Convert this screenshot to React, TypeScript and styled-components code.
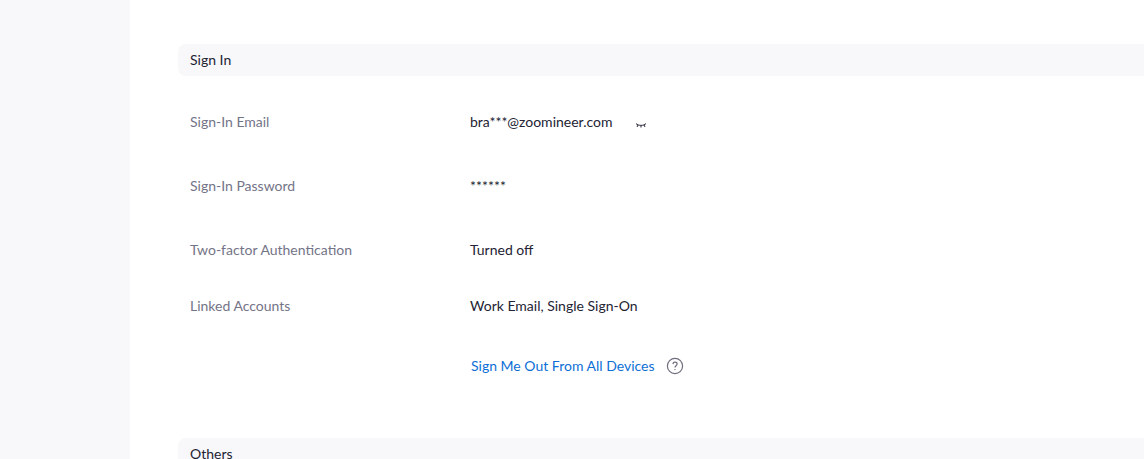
import styled, { createGlobalStyle } from "styled-components";

const GlobalStyle = createGlobalStyle`
  html, body {
    margin: 0;
    height: 100%;
    overflow: hidden;
    background-color: #ffffff;
    font-family: Lato, "Open Sans", sans-serif;
  }
`;

const Page = styled.div`
  display: flex;
  width: 1144px;
  height: 459px;
  overflow: hidden;
`;

const Sidebar = styled.aside`
  flex: 0 0 130px;
  background-color: #f8f8fb;
`;

const Main = styled.main`
  flex: 1;
  padding: 44px 0 0 48px;
`;

const SectionHeader = styled.h2`
  display: flex;
  align-items: center;
  box-sizing: border-box;
  height: 32px;
  margin: 0;
  padding: 0 0 2px 12px;
  border-radius: 8px 0 0 8px;
  background-color: #f8f8fb;
  font-size: 14px;
  font-weight: 400;
  color: #232333;
`;

const Rows = styled.div`
  display: flex;
  flex-direction: column;
  padding: 14px 0 36px;
`;

const Row = styled.div<{ $height: number }>`
  display: grid;
  grid-template-columns: 280px 1fr;
  align-items: center;
  box-sizing: border-box;
  height: ${(props) => props.$height}px;
  padding: 0 0 2px 12px;
`;

const Label = styled.div`
  font-size: 14px;
  color: #747487;
`;

const Value = styled.div`
  display: flex;
  align-items: center;
  font-size: 14px;
  color: #232333;
`;

const Stars = styled.span`
  font-size: 14px;
  letter-spacing: 0.05px;
`;

const EyeButton = styled.button`
  display: flex;
  margin: 7px 0 0 23px;
  padding: 0;
  border: 0;
  background: none;
  cursor: pointer;
`;

const SignOutLink = styled.a`
  margin-left: 1px;
  font-size: 14px;
  color: #0d6fd6;
  text-decoration: none;
`;

const HelpIcon = styled.span`
  display: flex;
  margin: 2px 0 0 11px;
  color: #6e6e7e;
`;

function ClosedEye() {
  return (
    <svg width="12" height="8" viewBox="0 0 12 8" fill="none" stroke="#232333" strokeWidth="1">
      <path d="M1 2.5C3 5 9 5 11 2.5" />
      <path d="M3 4L2 6M6 5v1.5M9 4l1 2" />
    </svg>
  );
}

function Help() {
  return (
    <svg width="18" height="18" viewBox="0 0 18 18" fill="none" stroke="currentColor">
      <circle cx="9" cy="9" r="7.6" strokeWidth="1.2" />
      <path d="M6.9 7.1C7 5.8 7.9 5.2 9 5.2c1.2 0 2.1.7 2.1 1.8 0 1.7-2.1 1.7-2.1 3.5" strokeWidth="1.2" />
      <circle cx="9" cy="12.6" r="0.7" fill="currentColor" stroke="none" />
    </svg>
  );
}

export default function App() {
  return (
    <Page>
      <GlobalStyle />
      <Sidebar />
      <Main>
        <SectionHeader>Sign In</SectionHeader>
        <Rows>
          <Row $height={64}>
            <Label>Sign-In Email</Label>
            <Value>
              bra***@zoomineer.com
              <EyeButton aria-label="Show email">
                <ClosedEye />
              </EyeButton>
            </Value>
          </Row>
          <Row $height={64}>
            <Label>Sign-In Password</Label>
            <Value>
              <Stars>******</Stars>
            </Value>
          </Row>
          <Row $height={64}>
            <Label>Two-factor Authentication</Label>
            <Value>Turned off</Value>
          </Row>
          <Row $height={48}>
            <Label>Linked Accounts</Label>
            <Value>Work Email, Single Sign-On</Value>
          </Row>
          <Row $height={72}>
            <div />
            <Value>
              <SignOutLink href="#">Sign Me Out From All Devices</SignOutLink>
              <HelpIcon>
                <Help />
              </HelpIcon>
            </Value>
          </Row>
        </Rows>
        <SectionHeader>Others</SectionHeader>
      </Main>
    </Page>
  );
}
